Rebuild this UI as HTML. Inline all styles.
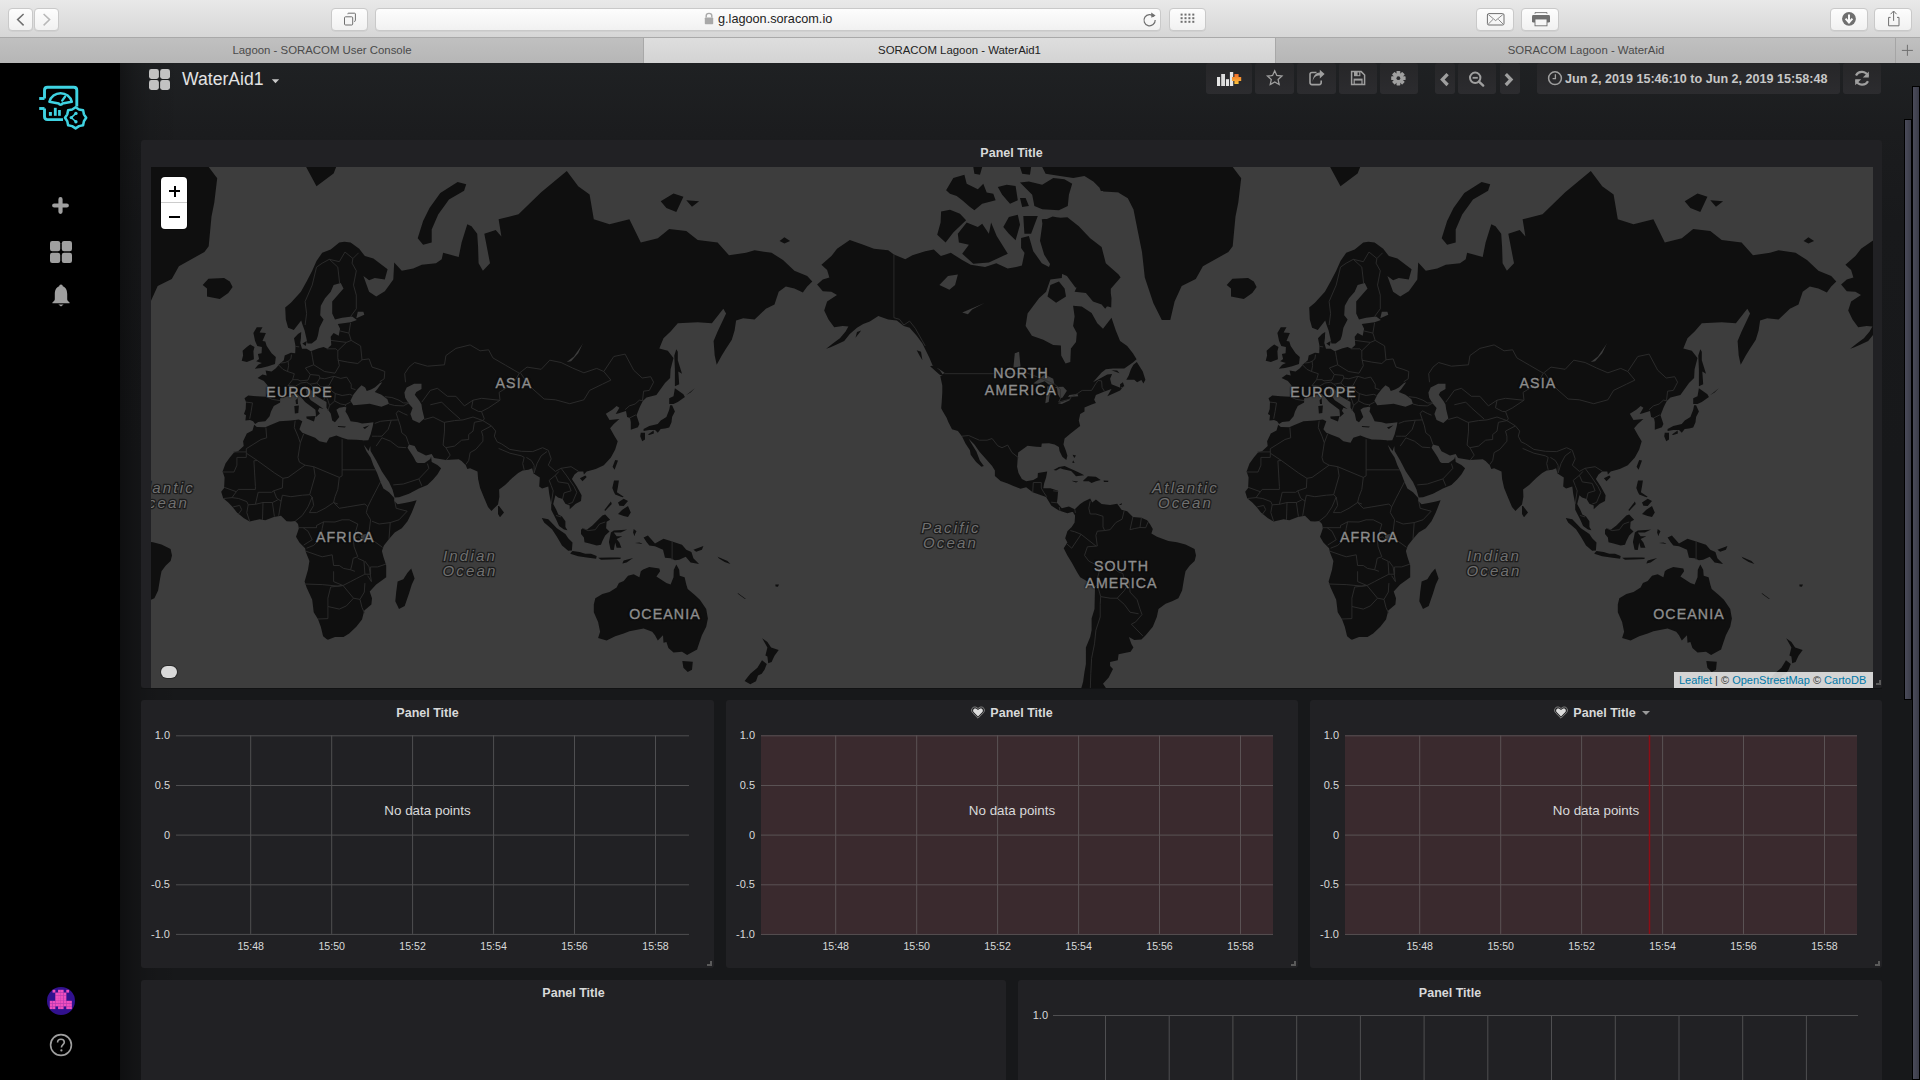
<!DOCTYPE html><html><head><meta charset="utf-8"><style>
*{box-sizing:border-box}
html,body{margin:0;padding:0;width:1920px;height:1080px;overflow:hidden;background:#161719;font-family:"Liberation Sans",sans-serif}
.abs{position:absolute}
#toolbar{position:absolute;left:0;top:0;width:1920px;height:38px;background:linear-gradient(#e9e9e9,#d6d6d6);border-bottom:1px solid #a9a9a9}
.sbtn{position:absolute;top:8px;height:23px;background:linear-gradient(#fdfdfd,#f1f1f1);border:1px solid #c9c9c9;border-radius:4px;box-shadow:0 0.5px 0 rgba(0,0,0,0.08)}
#tabs{position:absolute;left:0;top:38px;width:1920px;height:25px;background:linear-gradient(#c0c0c0,#b6b6b6)}
.tab{position:absolute;top:0;height:25px;font-size:11.4px;color:#4a4a4a;text-align:center;line-height:24px}
.tab.active{background:linear-gradient(#dedede,#d3d3d3);color:#222;border-left:1px solid #a8a8a8;border-right:1px solid #a8a8a8}
#side{position:absolute;left:0;top:63px;width:120px;height:1017px;background:#000}
#main{position:absolute;left:120px;top:63px;width:1800px;height:1017px;background:linear-gradient(90deg,rgba(0,0,0,0.38) 0px,rgba(0,0,0,0.2) 14px,rgba(0,0,0,0.08) 30px,rgba(0,0,0,0) 60px),linear-gradient(180deg,#1f2123 0px,#1b1c1e 70px,#18191b 160px,#17181a 400px)}
.nbtn{position:absolute;top:63px;height:31px;background:linear-gradient(#262628,#2c2c2f);border-radius:3px;color:#a0a0a0}
.panel{position:absolute;background:#212124;border-radius:3px}
.ptitle{position:absolute;left:0;right:0;top:5px;text-align:center;font-size:12.5px;font-weight:bold;color:#d8d9da;line-height:16px}
.ylab{position:absolute;font-size:11px;color:#d8d9da;text-align:right;line-height:14px}
.xlab{position:absolute;font-size:10.6px;color:#d8d9da;width:40px;text-align:center;line-height:14px}
.nodata{position:absolute;left:0;right:0;text-align:center;font-size:13.4px;color:#d8d9da;line-height:16px}
.rh{position:absolute;right:2px;bottom:2px;width:5px;height:5px;border-right:2px solid #5a5a5a;border-bottom:2px solid #5a5a5a}
.heart{font-size:13px;color:#d8d9da;margin-right:5px;font-weight:normal}
.pcaret{display:inline-block;width:0;height:0;border-left:4px solid transparent;border-right:4px solid transparent;border-top:4px solid #9a9a9a;margin-left:6px;vertical-align:2px}

.clab{position:absolute;width:300px;text-align:center;font-weight:normal;color:#8c8c8c;-webkit-text-stroke:0.35px #8c8c8c;line-height:16px;text-shadow:0 0 2px #0e0e0e,0 0 2px #0e0e0e,0 0 1px #0e0e0e}
.olab{position:absolute;width:300px;text-align:center;font-weight:normal;font-style:italic;color:#707070;line-height:16px;-webkit-text-stroke:2.6px #1c1c1c;paint-order:stroke fill}
.zoomc{position:absolute;background:#fff;border-radius:4px;box-shadow:0 0 0 1px rgba(0,0,0,0.3)}
.zplus{position:absolute;left:8px;top:9.5px;width:11px;height:9px}
.zplus:before{content:"";position:absolute;left:0;top:3.5px;width:11px;height:2px;background:#000}
.zplus:after{content:"";position:absolute;left:4.5px;top:-1px;width:2px;height:11px;background:#000}
.zminus{position:absolute;left:8px;top:39px;width:11px;height:2px;background:#000}
.attr{position:absolute;background:rgba(255,255,255,0.78);font-size:11px;line-height:16px;padding-left:5px;white-space:nowrap;color:#333}
.lk{color:#0078a8}
</style></head><body><div id="toolbar"></div>
<div class="sbtn" style="left:8px;width:25px"></div>
<div class="sbtn" style="left:34px;width:25px"></div>
<div class="sbtn" style="left:331px;width:37px"></div>
<div class="sbtn" style="left:1169px;width:37px"></div>
<div class="sbtn" style="left:1476px;width:38px"></div>
<div class="sbtn" style="left:1521px;width:38px"></div>
<div class="sbtn" style="left:1830px;width:38px"></div>
<div class="sbtn" style="left:1874px;width:38px"></div>
<div class="sbtn" style="left:375px;width:786px"></div>
<div class="abs" style="left:718px;top:11px;font-size:12.7px;color:#222;line-height:16px">g.lagoon.soracom.io</div>
<div id="tabs">
<div class="tab" style="left:0;width:644px">Lagoon - SORACOM User Console</div>
<div class="tab active" style="left:643px;width:633px">SORACOM Lagoon - WaterAid1</div>
<div class="tab" style="left:1276px;width:620px">SORACOM Lagoon - WaterAid</div>
</div>
<div id="side"></div>
<div id="main"></div>
<div class="nbtn" style="left:1206px;width:46px"></div>
<div class="nbtn" style="left:1255px;width:39px"></div>
<div class="nbtn" style="left:1297px;width:39px"></div>
<div class="nbtn" style="left:1339px;width:38px"></div>
<div class="nbtn" style="left:1380px;width:38px"></div>
<div class="nbtn" style="left:1435px;width:20px"></div>
<div class="nbtn" style="left:1458px;width:38px"></div>
<div class="nbtn" style="left:1500px;width:20px"></div>
<div class="nbtn" style="left:1537px;width:303px"></div>
<div class="nbtn" style="left:1843px;width:38px"></div>
<div class="abs" style="left:1565px;top:71px;font-size:12.6px;font-weight:bold;color:#c7c7c7;line-height:16px">Jun 2, 2019 15:46:10 to Jun 2, 2019 15:58:48</div>
<div class="abs" style="left:182px;top:68px;font-size:17.6px;color:#e3e3e3;line-height:22px">WaterAid1</div>
<div class="panel" style="left:141px;top:140px;width:1741px;height:548px"><div class="ptitle">Panel Title</div></div>
<div class="abs" style="left:151px;top:167px;width:1722px;height:521px;background:#3d3d3d;overflow:hidden"><svg width="1722" height="521" style="position:absolute;left:0;top:0"><defs><g id="w"><path d="M34.1,262.4L39.8,257.5L46.4,255.4L44.1,248.1L38.4,242.8L48.4,234.1L54.0,226.7L66.8,218.0L79.6,222.4L91.0,226.7L105.2,228.3L110.9,232.5L122.3,237.3L129.4,233.3L142.2,229.2L150.8,227.5L157.9,234.1L167.8,230.8L179.2,238.1L187.7,242.8L202.0,245.1L213.3,241.2L224.7,246.6L233.2,245.1L238.9,243.5L244.6,216.2L250.3,229.2L258.8,241.2L266.0,245.1L271.6,229.2L280.2,235.7L278.8,256.1L267.4,257.5L263.1,269.8L256.0,276.3L244.6,291.6L242.6,304.1L248.9,313.7L260.3,317.8L270.2,322.9L277.9,323.4L278.2,333.6L282.5,341.5L287.3,340.1L287.9,326.4L293.0,319.9L293.8,311.1L290.1,304.1L291.6,294.5L290.1,283.8L298.7,284.4L308.6,291.0L314.3,301.3L320.0,306.8L328.5,295.7L332.8,308.4L337.1,318.9L344.2,323.9L349.9,331.2L353.6,337.3L349.9,340.5L341.3,346.4L330.0,346.4L322.8,347.3L318.6,350.4L310.0,360.2L324.3,352.5L329.1,352.1L327.1,356.8L328.5,362.2L338.5,366.3L341.3,363.5L337.1,368.4L324.3,374.3L328.5,367.1L321.4,369.6L312.9,373.1L311.2,377.8L312.9,380.9L308.6,382.4L301.5,385.4L301.5,389.5L297.2,392.1L295.8,398.6L297.2,403.9L293.0,407.3L287.3,411.8L281.6,416.5L280.5,422.5L283.0,429.0L284.4,433.8L283.3,437.9L279.3,434.7L276.5,429.0L275.9,425.1L271.6,422.5L266.0,421.2L258.8,421.5L258.3,425.1L253.2,424.8L244.6,423.8L240.4,426.7L235.2,430.6L234.7,436.0L234.1,444.7L235.5,450.9L238.9,456.9L243.2,459.3L250.3,458.1L254.6,455.4L254.9,450.9L264.2,449.4L263.1,455.4L261.1,461.4L260.3,466.2L267.4,466.2L275.1,468.8L274.5,476.2L273.9,480.8L278.8,486.3L285.9,484.6L291.6,487.2L291.6,489.2L284.4,491.2L275.9,488.6L268.2,483.4L263.1,475.0L256.0,472.4L249.7,470.3L243.2,465.3L237.5,466.8L230.4,464.1L224.7,461.4L217.6,459.0L211.9,453.9L211.9,448.4L209.1,444.1L203.4,437.6L196.3,429.6L191.4,422.5L185.5,416.5L190.0,424.1L193.4,429.6L196.8,438.5L200.8,444.1L198.5,444.7L193.1,440.1L187.7,432.8L186.9,428.3L182.6,421.8L178.9,414.2L174.9,409.1L169.0,407.3L165.3,400.0L163.6,395.7L159.9,389.5L158.2,386.2L158.7,380.1L159.3,370.4L159.3,363.5L157.3,354.3L161.6,350.8L156.4,347.3L149.3,342.8L146.5,335.9L142.2,327.3L139.4,321.4L133.7,313.7L126.6,305.7L120.9,304.1L113.8,298.5L105.2,297.4L95.3,293.9L86.8,299.6L80.2,301.9L74.0,305.7L66.8,312.1L61.2,318.9L52.6,322.9L46.9,325.4L43.2,326.8L49.8,321.4L56.9,316.3L62.6,309.5L65.4,304.6L59.7,304.1L51.2,305.2L45.5,297.4L41.2,288.6L44.1,279.5L54.0,273.1L48.4,269.8L39.8,269.2ZM291.8,487.2L297.2,482.0L300.9,479.6L307.2,476.5L309.2,480.5L312.9,477.6L318.6,482.0L327.1,483.1L334.2,481.7L338.5,487.7L344.2,489.2L349.9,494.9L358.4,495.8L364.1,498.3L366.9,502.0L369.8,506.9L368.4,511.4L374.0,514.8L385.4,519.1L394.0,520.3L402.5,522.5L411.6,527.1L413.0,533.4L411.6,539.1L406.8,543.5L402.5,549.3L401.1,556.6L399.1,568.6L395.4,576.2L389.1,579.3L382.6,581.7L375.5,587.1L373.8,595.0L369.8,604.8L362.7,613.2L358.4,617.4L351.3,618.0L345.9,614.9L348.4,621.9L350.4,625.4L347.6,629.7L335.6,632.3L334.8,638.2L327.1,640.1L327.1,643.9L330.0,647.0L325.7,655.6L320.0,661.8L324.3,668.0L318.6,676.7L315.7,683.5L317.2,688.1L322.8,700.1L318.6,704.1L312.9,700.1L305.8,692.8L300.1,685.8L297.2,670.2L300.1,659.7L301.5,649.7L302.9,642.0L302.9,625.4L307.2,614.9L308.6,608.2L308.6,596.6L311.5,587.1L312.0,565.6L307.2,561.1L297.2,555.2L294.4,550.8L288.7,540.6L284.4,533.4L280.7,526.2L284.4,520.5L282.2,516.3L284.4,509.2L288.7,504.9L291.6,500.6L292.1,493.5L290.1,490.6ZM328.2,285.6L317.2,282.0L310.0,279.5L302.9,271.1L291.6,269.8L294.4,263.8L302.9,263.1L305.8,251.0L295.8,248.8L291.6,233.3L278.8,230.8L273.1,229.2L261.7,220.6L258.8,197.3L270.2,196.3L284.4,195.3L295.8,204.2L307.2,216.2L318.6,225.0L322.8,241.2L335.6,252.5L337.6,255.4L327.1,266.5L328.5,276.3ZM283.0,274.4L273.1,280.7L264.5,274.4L267.4,263.1L275.9,259.6L281.6,266.5ZM78.2,308.4L72.5,315.8L74.0,310.0ZM496.1,402.1L494.1,399.3L491.0,397.9L486.4,398.6L487.0,393.2L485.0,392.1L486.7,386.9L487.0,380.1L485.5,376.3L489.2,373.5L497.8,374.3L506.9,374.7L508.6,368.4L508.6,363.5L504.9,358.9L498.6,356.0L503.5,352.5L507.7,353.4L506.6,348.6L512.6,349.5L516.6,346.4L520.5,341.9L524.8,338.2L525.7,333.6L531.9,330.7L536.2,331.2L536.5,323.9L535.0,316.3L539.0,312.1L542.2,310.0L541.9,316.3L541.3,320.9L543.0,326.8L547.6,326.8L551.8,329.3L558.9,326.4L564.6,324.9L568.3,326.8L572.3,322.9L571.7,314.8L574.6,311.1L579.7,313.7L581.1,306.8L578.8,301.9L591.6,300.2L597.9,297.9L593.1,294.5L583.1,295.7L576.0,297.4L573.2,291.6L573.2,279.5L584.5,266.5L581.7,261.0L574.6,263.1L571.7,269.8L566.0,276.3L561.8,283.8L561.2,293.3L564.6,297.4L560.4,305.7L558.9,313.7L557.5,317.8L552.7,321.4L548.4,321.4L547.6,317.3L545.6,308.4L543.6,303.0L542.2,298.5L534.8,307.9L529.1,305.7L526.8,297.4L526.2,285.6L531.9,280.7L541.9,269.8L547.6,259.6L553.2,248.8L557.5,238.9L563.2,230.8L571.7,227.5L580.3,220.6L585.4,219.8L591.6,220.6L600.2,226.7L605.9,234.1L614.4,236.5L628.6,247.3L625.8,257.5L615.8,256.1L610.1,258.2L604.4,253.9L610.1,269.8L617.2,274.4L625.8,269.2L634.3,257.5L635.2,240.4L642.8,248.8L654.2,246.6L662.8,242.8L677.0,241.2L682.7,237.3L684.1,230.8L699.7,234.9L702.6,220.6L708.3,202.2L712.5,204.2L718.2,211.7L719.1,225.0L719.6,241.2L723.9,248.8L731.0,241.2L725.3,211.7L736.7,208.0L742.4,214.4L739.6,197.3L759.5,192.2L782.2,170.2L807.8,148.9L819.2,164.2L830.6,172.5L834.8,197.3L850.5,202.2L870.4,197.3L881.8,220.6L898.8,216.2L910.2,207.0L927.3,208.9L938.7,218.0L958.6,220.6L970.0,233.3L987.0,230.8L995.6,228.3L1012.6,230.8L1024.0,238.1L1035.4,248.8L1048.2,253.9L1053.3,259.6L1048.2,264.5L1043.9,270.5L1035.4,266.5L1026.8,264.5L1019.7,269.8L1015.5,282.6L1006.9,286.8L995.6,297.4L984.2,296.2L977.1,298.5L975.6,308.4L972.8,317.8L967.1,326.4L962.8,333.6L957.7,342.8L955.7,333.6L954.6,318.9L958.6,309.5L967.1,291.6L964.3,286.8L952.9,301.3L938.7,300.2L918.8,301.3L911.6,309.5L904.5,316.3L900.3,326.4L908.8,328.8L914.5,335.9L911.6,347.3L911.1,356.0L906.0,361.0L897.4,373.1L887.5,375.5L883.8,379.0L880.9,384.7L877.5,393.2L880.4,402.1L878.9,405.3L871.8,407.7L871.8,400.3L871.0,396.1L868.1,395.0L867.0,389.1L859.0,391.4L856.7,392.1L860.4,385.8L857.6,383.9L853.3,387.7L846.8,391.7L850.5,397.9L860.4,397.1L854.8,402.1L851.1,406.3L855.6,414.2L858.7,419.2L856.2,427.4L851.9,435.4L844.8,443.2L836.8,446.9L827.7,449.4L824.9,452.4L824.3,449.4L819.2,449.4L815.5,452.4L812.9,456.9L817.8,464.4L822.6,473.2L822.0,479.1L816.4,482.0L810.7,487.2L810.7,483.4L806.4,481.7L803.6,477.0L799.0,475.6L796.4,473.2L794.2,482.0L797.3,487.7L799.3,492.6L803.0,494.6L806.4,499.2L806.4,504.9L808.4,508.3L805.0,507.4L800.1,504.0L797.3,497.8L792.2,487.7L792.2,482.0L790.2,471.8L789.3,464.4L783.1,466.5L780.2,464.4L780.8,455.4L774.5,451.5L773.1,446.3L769.4,447.8L763.7,448.4L759.2,450.9L753.8,455.4L746.1,462.9L740.1,467.4L740.4,474.7L739.0,482.5L732.4,488.9L729.0,484.9L725.3,476.2L721.1,465.9L719.1,456.9L718.5,449.4L711.1,446.3L708.3,446.9L706.8,443.2L702.6,439.1L699.7,437.3L686.9,437.9L675.0,436.0L672.7,431.9L667.0,433.5L658.5,429.3L655.6,424.1L650.0,422.5L648.5,425.7L652.8,432.2L654.8,435.4L657.1,440.1L658.8,441.0L665.6,441.0L671.3,436.9L672.1,434.4L672.7,440.1L678.4,442.9L682.1,446.3L678.4,452.4L674.1,457.5L668.4,462.9L659.9,466.5L650.0,471.8L640.0,475.3L635.7,475.6L633.5,467.4L630.0,459.9L622.9,449.4L617.2,438.5L611.6,429.0L611.3,424.1L609.6,429.0L604.7,422.8L603.9,418.5L609.3,418.2L611.6,412.5L613.8,403.9L614.4,400.3L608.7,401.1L603.0,401.4L598.8,400.3L591.6,399.3L588.8,393.2L586.5,389.5L587.4,385.4L586.0,384.7L580.3,385.8L577.4,387.7L580.3,395.0L576.0,400.3L573.2,398.6L571.7,391.4L567.5,385.8L567.5,380.1L557.5,374.3L551.8,367.6L550.4,365.5L547.0,367.6L547.6,372.3L551.8,378.2L557.5,382.0L564.6,386.9L560.4,385.8L558.9,388.8L560.9,391.4L556.7,395.3L556.9,392.4L556.4,387.7L552.4,384.7L546.1,380.1L541.9,375.1L537.6,371.2L533.3,373.1L526.2,375.1L521.1,376.3L521.1,380.5L514.8,383.9L512.0,389.5L510.6,394.3L506.3,399.3L499.2,400.0ZM495.8,346.8L502.0,346.0L509.2,344.2L516.0,341.9L516.8,335.0L512.6,331.2L507.7,323.9L506.3,319.4L503.5,318.9L506.9,311.1L500.6,310.6L503.5,305.2L497.8,305.2L494.4,311.1L496.1,318.9L498.3,323.9L502.9,324.9L502.6,331.2L498.9,332.1L500.1,336.9L497.2,339.2L502.9,341.0L499.2,342.8ZM494.9,337.3L494.4,329.3L495.5,324.9L491.2,322.4L487.8,324.9L483.6,328.8L484.1,333.6L482.7,338.7L487.8,340.1ZM448.0,266.5L443.7,263.1L449.4,256.8L465.1,256.1L470.8,259.6L473.6,265.1L469.3,271.1L460.8,276.9L448.0,274.4ZM547.3,394.6L556.4,393.9L555.0,399.6L547.6,396.4ZM535.3,383.9L539.9,383.5L539.3,391.0L535.9,391.4ZM536.5,378.2L538.7,376.3L539.0,382.0L537.0,382.0ZM578.8,403.9L586.8,404.6L586.0,405.6L579.1,404.9ZM603.9,405.6L610.4,403.2L605.9,407.0ZM543.3,321.4L547.8,318.9L546.7,323.9ZM543.3,137.9L557.5,164.2L574.6,151.6L588.8,115.0L546.1,115.0ZM915.9,364.3L920.2,362.2L919.3,349.5L923.0,351.7L918.8,338.2L918.8,329.8L917.3,327.3L915.3,333.6L915.9,347.3ZM910.2,382.0L914.5,382.0L918.8,380.1L925.9,375.1L924.4,372.3L915.9,366.3L914.5,374.3L910.2,376.3ZM913.1,383.2L915.9,389.5L913.1,395.0L912.5,400.3L910.2,405.6L906.0,406.6L901.7,407.0L898.8,410.8L896.0,408.0L890.3,408.0L884.6,409.1L884.6,407.0L890.3,403.9L898.8,402.1L901.7,398.6L907.4,395.0L910.2,387.7L911.1,383.2ZM881.8,410.8L886.0,410.8L886.0,417.5L883.2,419.2L881.2,414.2ZM888.9,412.5L894.6,408.4L894.9,411.4L890.3,413.1ZM856.2,437.9L859.0,438.5L855.6,447.8L853.6,444.7ZM820.9,456.3L826.3,453.6L827.7,455.1L823.5,459.3ZM739.0,484.0L740.1,484.0L745.0,490.6L741.0,495.2L739.0,492.0ZM855.0,458.4L859.9,458.4L859.0,464.4L857.9,470.3L864.7,474.7L863.3,475.3L856.2,472.4L855.0,470.3L853.3,465.9ZM859.0,492.0L863.3,487.7L869.0,484.0L871.8,490.6L869.0,494.9L864.7,494.0ZM859.0,480.5L864.7,476.7L869.0,479.1L864.7,484.0L860.4,483.7ZM845.4,488.0L851.9,479.6L852.8,482.0L846.2,488.9ZM822.0,507.7L823.8,506.3L827.7,507.7L833.4,503.5L839.1,497.8L843.4,493.5L846.2,492.6L851.1,497.8L847.6,499.8L847.1,506.3L850.5,509.4L846.2,513.4L843.4,519.1L842.0,522.8L837.7,523.4L830.6,521.4L825.5,520.3L824.9,515.4L822.0,512.0ZM782.8,496.0L789.3,497.2L797.9,506.3L806.4,512.0L809.2,516.3L813.5,520.5L812.9,528.5L809.2,528.8L803.0,523.4L797.9,514.8L793.0,507.2L785.1,500.6ZM811.2,531.4L813.5,529.1L820.6,530.0L826.3,531.7L832.0,531.7L837.7,534.0L837.1,536.8L827.7,535.4L819.2,534.3L812.1,532.0ZM839.1,535.7L850.5,535.4L859.0,535.4L861.9,535.7L861.3,537.1L850.5,537.4L842.0,537.7ZM864.7,538.6L874.1,536.0L867.6,540.6L863.3,541.5ZM849.9,520.0L851.9,510.6L854.8,508.6L866.1,507.7L868.1,507.4L861.9,510.6L854.8,510.6L857.6,514.3L863.3,514.3L857.6,517.1L860.4,520.5L862.4,525.7L857.6,525.7L856.2,520.5L854.8,528.0L851.6,527.7ZM884.6,515.4L888.9,513.4L896.0,521.4L904.5,516.8L913.1,519.4L923.0,522.8L927.3,527.7L932.4,530.0L934.4,536.3L940.1,542.0L931.6,540.6L926.7,534.8L920.2,537.7L915.9,538.3L911.6,536.3L906.0,535.7L904.0,527.7L896.0,524.2L890.3,523.4L887.5,520.0ZM934.4,527.7L944.4,524.0L942.9,527.7L937.2,529.7ZM917.3,542.6L920.2,547.8L920.7,553.7L925.6,555.2L927.3,562.6L928.7,567.1L935.8,573.1L940.9,577.7L947.2,587.1L948.9,596.6L947.2,604.8L942.9,613.2L938.7,625.4L938.1,627.6L928.1,633.0L923.0,629.7L914.5,630.5L909.4,626.1L907.4,620.1L904.5,620.8L904.0,613.2L898.8,618.4L896.0,613.2L893.2,609.8L884.6,606.5L870.4,609.2L864.7,611.5L856.2,614.3L847.6,618.4L839.1,616.0L841.1,609.8L839.1,599.9L834.8,590.2L834.8,582.4L836.3,576.2L843.4,571.9L850.5,570.1L857.6,565.6L859.9,561.1L864.7,559.0L869.0,553.7L874.7,552.2L880.4,555.2L881.8,549.3L884.1,547.5L890.3,544.9L900.3,546.4L901.1,549.3L897.4,554.6L907.4,561.1L911.6,562.6L914.5,555.2L914.8,547.8ZM923.3,638.9L933.8,639.7L933.0,647.7L928.7,650.1L924.4,645.8ZM1003.2,616.3L1008.4,620.1L1012.1,625.4L1019.7,627.9L1015.5,633.7L1012.6,640.1L1009.2,641.2L1008.4,634.5L1006.4,633.4L1008.4,625.4ZM1003.0,638.2L1007.8,642.0L1005.5,647.7L1002.7,651.7L999.0,653.6L997.0,659.3L991.3,662.2L985.6,658.9L991.3,651.7L998.4,645.8ZM495.2,402.8L493.5,408.4L487.8,411.4L484.1,419.2L484.7,424.1L479.3,429.0L475.0,430.6L470.8,435.4L466.5,441.6L463.6,449.4L465.6,455.4L465.1,465.9L462.2,469.7L464.2,476.2L469.3,480.5L473.6,484.9L477.9,490.6L485.0,496.3L490.7,499.5L500.6,497.2L506.3,498.3L514.8,494.9L522.0,493.8L527.6,499.2L531.9,499.5L536.2,498.9L539.0,502.0L539.9,506.3L538.5,510.6L537.0,514.8L540.4,520.5L546.1,526.2L547.0,530.5L550.4,539.1L549.0,547.8L545.6,559.6L547.6,565.6L553.2,577.7L554.7,590.2L558.9,597.0L561.8,604.8L564.1,614.3L567.5,617.0L568.9,617.7L576.0,614.9L584.5,614.9L590.2,611.5L597.3,604.8L603.0,597.6L605.3,588.6L612.4,582.4L613.0,576.2L610.7,569.5L617.2,562.6L627.2,555.2L627.2,543.5L624.4,534.8L622.9,529.1L624.9,523.4L630.0,517.1L635.7,510.6L642.8,506.3L648.5,499.2L652.8,490.6L657.6,478.2L652.8,479.6L645.7,481.1L638.6,482.3L635.2,479.1L635.2,475.9L630.0,470.3L624.4,466.5L621.5,459.9L618.1,450.9L614.4,443.2L611.6,435.4L607.3,429.0L604.7,422.8L603.9,418.2L597.3,417.8L588.8,417.5L583.1,415.8L577.4,413.5L570.3,415.8L567.5,420.8L560.4,419.2L556.1,415.8L549.0,413.1L543.3,410.8L540.4,407.3L543.3,399.3L539.9,397.5L531.9,398.6L520.5,399.3L512.0,402.8L506.3,405.3L497.8,404.9ZM652.2,546.4L655.6,556.6L652.8,562.6L650.0,571.6L645.7,583.9L640.0,587.1L636.3,579.3L637.2,570.1L638.6,559.6L644.3,557.2L648.5,550.8ZM270.5,448.1L275.9,445.1L281.6,444.1L285.9,446.0L291.6,448.4L297.0,450.9L301.2,453.3L293.0,454.2L291.0,452.1L288.1,449.1L280.2,447.2L277.3,446.3L273.1,448.4ZM300.1,458.7L304.9,454.2L312.9,454.8L317.7,458.1L312.9,459.3L308.6,461.1L305.8,459.3L300.4,459.3ZM289.0,458.7L295.3,459.6L293.0,460.5L289.6,459.3ZM320.6,458.4L325.4,458.7L325.1,459.9L320.9,459.9ZM289.6,432.8L293.0,433.5L291.3,436.0ZM290.1,438.2L291.6,441.0L289.3,440.7ZM353.8,340.1L359.8,349.5L362.4,357.7L360.4,361.4L358.4,358.1L354.1,360.2L351.3,357.7L343.3,357.7L345.6,353.8L347.9,347.3L350.4,342.8ZM337.1,365.9L341.3,364.3L339.9,360.2L337.1,362.2ZM328.5,348.2L336.5,351.2L334.2,348.6ZM335.9,483.1L338.8,481.1L338.5,483.1ZM337.9,684.8L347.0,682.5L345.6,687.1L339.9,686.7ZM316.9,688.5L327.1,699.1L321.4,701.1L311.5,700.1L307.2,695.2L312.9,692.8ZM161.3,354.7L156.4,352.5L147.1,344.2L150.8,343.3L157.0,348.6ZM139.4,338.2L136.5,333.6L133.7,328.3L138.0,329.8ZM978.5,570.7L987.0,577.1L985.6,576.8L979.1,571.9ZM1016.3,562.6L1020.0,562.6L1018.9,564.7L1016.6,564.4ZM958.6,534.8L968.5,539.1L971.4,542.0L965.7,540.0L960.0,536.6ZM874.7,506.9L877.5,509.2L876.1,512.0L875.5,514.3L874.1,510.6ZM876.1,521.1L884.1,522.0L880.4,520.5ZM1020.6,218.9L1025.4,215.3L1031.1,218.9L1025.4,221.5ZM901.7,179.3L914.5,171.4L924.4,174.8L917.3,190.1L907.4,185.9ZM927.3,178.2L940.1,179.3L933.0,184.8ZM782.2,130.6L796.4,144.9L810.7,137.9L802.1,122.9ZM648.5,106.6L668.4,115.0L688.4,106.6L677.0,88.4ZM927.3,373.1L931.6,370.4L935.8,366.3L933.0,368.4ZM158.1,189.4L167.0,187.8L177.0,191.7L183.1,198.3L170.3,210.6L162.6,220.6L154.2,212.8L157.6,200.6ZM174.8,211.7L183.7,200.6L194.8,205.0L199.2,201.7L205.9,211.7L208.1,200.6L213.7,213.9L224.8,231.7L205.9,240.6L190.3,241.7L179.2,231.7L185.9,222.8L175.9,220.6ZM220.3,205.0L225.9,195.0L234.8,192.8L237.0,202.8L232.6,218.3L225.9,211.7ZM240.3,193.9L254.8,193.9L248.1,211.7L241.4,211.7ZM238.1,216.1L245.9,213.9L250.3,229.4L243.7,233.9L238.1,226.1ZM163.1,168.3L170.3,156.1L181.4,152.8L183.7,161.7L194.8,167.2L200.3,161.7L203.7,170.6L210.3,171.7L212.6,178.3L199.2,181.7L191.4,188.3L187.0,185.0L179.2,178.3L173.7,173.9L167.0,171.7ZM214.8,165.0L223.7,162.8L232.6,163.9L234.8,178.3L227.0,181.7L219.2,172.8ZM237.0,176.1L242.6,176.1L245.9,183.9L239.2,185.0ZM237.0,160.6L245.9,159.4L259.2,162.8L270.3,156.1L281.4,157.2L289.2,161.7L285.9,172.8L284.8,183.9L275.9,188.3L259.2,187.2L251.4,183.9L249.2,172.8L243.7,167.2ZM259.2,145.0L337.0,145.0L337.0,170.6L320.3,169.4L310.3,159.4L301.4,153.9L290.3,156.1L277.0,153.9L262.6,151.7ZM190.3,145.0L199.2,145.0L197.0,152.8L191.4,151.7ZM237.0,145.0L248.1,145.0L247.0,152.8L239.2,151.7ZM306.6,145.0L449.7,145.0L458.2,156.3L455.3,180.4L452.5,194.6L449.7,224.3L445.4,230.0L419.9,244.2L412.8,256.9L398.7,264.0L391.6,279.6L387.3,298.0L378.8,298.0L370.3,281.0L361.8,255.5L359.0,230.0L354.7,208.7L350.5,187.5L344.8,176.2L330.7,167.7L317.9,169.1L313.7,159.2L319.3,152.1ZM259.8,198.8L269.7,194.6L285.3,197.4L295.2,205.9L306.6,217.2L319.3,228.6L322.2,244.2L336.3,256.9L327.8,266.8L327.8,279.6L322.2,286.7L313.7,276.7L303.7,268.2L292.4,265.4L283.9,254.1L271.2,248.4L261.2,232.8L257.0,218.7ZM658.7,216.2L664.1,198.9L670.5,186.0L681.3,170.9L698.6,160.1L707.2,162.3L705.1,168.7L690.0,177.4L679.2,192.5L672.7,207.6L672.7,220.5L664.1,222.7Z" fill="#0f0f0f"/><path d="M250.3,361.4L257.4,356.0L261.7,352.5L270.2,356.8L271.4,362.2L266.0,362.7L261.7,359.3L254.6,361.8ZM262.3,381.3L264.5,364.3L270.2,365.1L266.5,374.3L265.7,380.1ZM271.6,365.1L280.2,364.7L283.9,368.8L279.6,375.5L277.3,376.3L274.8,372.3L273.9,366.3ZM274.8,381.3L287.3,377.0L286.7,378.2L278.8,382.0ZM285.0,375.1L295.3,374.3L294.4,372.0L286.4,373.1ZM230.4,345.5L237.5,344.6L236.1,329.8L231.8,331.2ZM179.2,290.4L193.4,284.4L202.0,280.7L189.2,287.4L184.9,292.2ZM156.4,263.1L165.0,253.9L174.9,252.5L172.1,263.1L166.4,267.8ZM602.2,512.9L608.7,511.4L609.3,514.8L606.7,519.1L603.0,518.5L601.9,514.8ZM807.8,340.1L812.1,339.2L819.2,331.2L824.3,320.4L822.9,322.9L814.9,334.5ZM597.3,296.2L605.3,292.8L604.4,289.8L598.8,289.8ZM591.4,378.7L594.3,372.8L598.8,366.9L602.5,363.2L606.2,365.4L607.7,369.1L612.1,367.6L615.8,365.4L621.0,361.0L623.2,360.2L618.0,367.6L615.8,369.9L622.5,372.8L628.4,377.3L629.9,381.7L622.5,384.7L610.6,381.7L603.2,382.4L594.3,383.2ZM645.4,370.6L647.7,365.4L655.1,361.7L662.5,361.7L662.5,366.9L657.3,369.9L655.8,372.8L660.3,378.7L662.5,382.4L663.2,387.6L665.4,396.5L660.3,401.0L653.6,398.0L651.4,392.1L653.6,386.1L649.9,381.7L646.2,375.8Z" fill="#3d3d3d"/><path d="M161.3,351.7L241.2,351.7L241.2,349.9L257.1,356.0L271.4,362.2L277.3,367.1L277.6,376.3L275.6,380.1L287.3,377.0L287.3,375.5L294.4,371.6L299.2,368.4L308.6,368.4L312.9,361.4L315.2,358.5L318.6,358.9L319.1,365.5L321.4,369.2M110.9,232.5L110.9,295.7L116.6,297.4L120.9,303.0L126.6,299.1L132.3,306.3L139.4,318.9L142.2,323.9M178.9,414.2L185.7,413.5L196.3,418.2L204.2,418.2L209.1,416.5L214.8,423.8L219.0,425.7L224.7,423.1L229.0,430.6L235.5,435.7M249.7,470.3L250.3,460.5L258.3,460.5L258.3,466.2M258.3,466.2L261.1,470.9L263.7,474.7M270.2,468.8L275.3,469.4M268.2,480.2L273.9,480.8M276.2,484.9L277.0,488.9M291.8,487.2L292.4,490.9M307.2,479.1L305.8,486.3L307.2,492.0L312.9,492.0L320.0,494.3L320.0,504.9L321.7,508.6M341.3,488.0L339.1,497.2L332.8,500.6L327.1,507.7L321.4,508.6L314.3,509.2L312.9,513.4L314.3,524.0L304.4,524.8L301.5,533.4L305.8,539.1L314.3,543.5L325.7,540.6L334.2,549.3L339.9,551.6L341.3,559.0L346.5,559.6L347.0,570.1L354.1,577.7L357.0,587.1L359.0,592.5L352.7,599.9L348.4,602.2L359.8,613.9M349.9,494.9L347.0,507.7L351.3,506.6L357.0,505.5L362.7,505.7L365.2,499.8M358.4,495.5L357.0,505.5M283.6,521.7L288.7,526.2L298.1,512.3L291.6,509.7L287.3,508.6M298.1,512.3L312.9,524.0M314.3,543.5L316.3,549.3L314.3,556.6L314.3,562.6L312.0,565.0M314.3,562.6L317.7,574.6L317.2,582.4L317.2,595.0L312.9,608.2L311.5,621.9L308.6,636.3L307.8,651.7L307.2,670.2L305.8,676.7L315.7,685.8M317.7,574.6L327.1,576.2L334.2,576.2L341.3,568.6L346.5,559.6M334.2,576.2L341.3,582.4L347.0,590.2L355.6,591.8M487.0,380.1L493.5,380.9L492.1,389.5L490.7,396.8M506.9,374.7L513.4,377.4L521.1,378.6M519.1,342.4L523.9,347.3L528.5,349.5L535.3,351.7L533.6,357.7L529.1,363.5L531.9,366.3L533.3,373.1M521.7,341.0L526.2,340.5L529.1,339.2L531.9,336.9L532.5,332.6M528.5,349.5L529.6,343.7L529.1,339.2M536.5,324.4L540.2,324.9M552.4,329.3L553.5,335.9L554.7,342.8L546.4,346.0L551.3,352.5L549.0,358.1L541.0,358.9L539.0,357.7L533.6,357.7M554.7,342.8L565.5,349.5L576.0,351.2L580.3,343.7L578.8,335.9L578.8,328.8L576.9,326.8L567.8,326.8M551.3,352.5L560.1,353.4L560.9,356.0L565.8,356.8L574.9,354.3M529.1,363.5L536.2,364.3L541.9,361.0L547.6,360.2L551.0,362.2L557.8,361.0L560.9,356.0M551.0,362.2L556.7,367.6L561.8,364.7M557.8,361.0L561.8,364.7L565.8,364.7L569.7,363.9L574.9,354.3L581.7,356.4L587.7,355.1L592.2,362.2L592.2,366.3L596.5,367.6M569.7,363.9L572.9,369.2L576.3,371.6L583.1,373.5L590.8,372.3L593.4,373.5M576.3,371.6L575.7,379.0L581.7,382.0L586.2,382.8L591.6,380.1M586.2,382.8L586.8,384.3M556.7,367.6L566.0,368.4L567.2,374.3L568.9,378.2L570.6,383.5L568.9,388.8M575.7,379.0L570.6,383.5M566.0,368.4L567.2,372.3L564.6,378.2M578.8,338.2L588.8,340.1L598.8,341.5L603.0,337.8L610.1,336.9L613.0,345.1L620.1,347.3L625.8,349.5L625.2,356.8L620.7,359.8M578.8,328.8L587.4,320.4L592.2,318.4L601.6,323.9L603.0,337.8M572.0,318.4L587.4,320.4M581.1,309.0L589.9,311.1L591.6,300.8M592.2,318.4L589.9,311.1M591.6,294.5L597.3,286.8L597.3,273.1L594.5,263.1L597.3,248.8L593.1,241.2L593.9,236.5M546.1,303.0L547.6,291.6L546.1,279.5L553.2,263.1L557.5,245.1L563.2,241.2L570.3,237.3L580.3,239.7L586.0,230.0L593.9,236.5L599.6,230.8M580.6,261.0L578.8,245.1L570.3,237.3M646.5,360.2L645.7,351.7L650.0,345.1L655.6,340.5L668.4,344.2L685.5,342.8L686.9,333.6L696.9,326.4L711.1,322.9L721.1,328.8L729.6,327.8L733.9,335.9L746.7,343.3L760.3,351.2M760.3,351.2L768.0,345.1L782.2,347.3L790.8,338.2L802.1,340.5L813.5,346.0L824.9,350.8L837.7,346.4L844.8,349.5L854.8,334.5L866.1,332.1L874.7,348.2L883.2,356.0L891.7,354.7L894.6,360.2L890.3,368.4L884.6,369.2L883.5,378.6M761.7,351.2L770.8,364.3L785.1,377.0L796.4,377.8L810.7,381.7L824.9,377.8L830.6,368.4L843.4,362.2L851.9,358.1L844.8,349.5M760.3,351.2L755.2,360.2L746.7,366.3L740.1,370.4L741.0,378.2L729.6,385.8L722.5,389.5L725.3,396.8L723.9,398.6L732.4,403.9L736.7,409.1L735.3,414.2L738.1,419.8L742.4,421.8M742.4,421.8L750.9,427.4L762.3,429.3L773.7,429.6L783.6,425.7L789.3,428.3L792.2,436.9L789.3,443.2L796.4,449.4L802.1,446.3L812.1,444.7L819.2,449.1M732.4,403.9L722.5,409.1L723.9,414.2L723.9,419.2L716.8,427.4L711.1,430.6L709.7,438.5L706.8,442.6M739.6,426.4L750.9,431.2L762.3,433.8M762.3,433.8L765.2,435.4L763.7,441.6L765.2,447.8M775.1,450.9L775.1,443.2L772.3,438.5L767.4,435.4M775.1,450.9L778.0,441.6L782.2,433.8L787.9,429.6M792.2,482.0L794.2,468.8L792.2,463.5L790.2,458.4L796.4,453.3L799.9,449.4M796.4,453.3L799.3,459.9L809.2,461.4L812.1,468.8L805.0,470.9L803.6,477.0M802.1,446.3L807.8,453.9L814.9,464.4L817.8,470.3L813.5,480.5L809.2,482.0M797.0,493.5L802.1,494.9M685.5,400.3L685.5,409.1L684.1,423.1L686.9,425.7L691.2,433.1L687.2,438.2M723.9,398.6L715.4,400.3L714.0,409.1L709.7,412.5L709.7,417.5L702.6,418.2L695.5,424.1L686.9,425.7M685.5,400.3L695.5,398.6L704.0,397.9L714.0,395.0L723.9,398.6M662.8,380.1L671.3,368.4L678.4,366.3L688.4,374.3L696.9,374.3L705.4,383.9L714.0,378.2L722.5,376.3L740.1,378.2M665.3,397.5L674.1,395.0L684.1,400.0L685.5,400.3M671.3,382.8L682.7,380.1L688.4,385.8L701.2,397.1M714.0,378.2L712.5,385.8L719.6,389.5L722.5,389.5M650.0,422.5L647.1,414.2L642.8,410.8L641.4,403.9L639.4,397.9L637.2,391.4L639.4,388.8M639.4,397.9L632.3,398.2L621.5,399.3L615.8,401.4M632.3,398.2L629.2,407.3L622.9,414.2L618.7,414.2L613.0,414.2M617.2,424.1L622.9,415.8L631.5,419.2L639.1,425.1L647.1,425.7M634.3,462.9L644.3,462.0L659.9,456.9L669.9,446.3L668.4,441.6M659.9,456.9L662.8,463.8M630.0,382.0L635.7,383.5L644.3,383.9L650.0,380.9M625.8,374.7L632.9,375.5L640.0,378.2L644.3,380.9L650.0,380.9M639.4,388.8L644.3,391.4L648.5,393.2M866.1,387.7L870.4,383.9L876.1,382.0L880.4,378.2L883.5,378.6M870.4,396.1L876.9,392.8M823.8,506.3L829.2,508.6L836.3,507.7L840.5,502.0L846.2,500.0M913.1,519.4L913.1,538.0M506.9,405.6L507.7,415.8L502.0,417.5L487.3,426.7L487.3,431.2M487.3,429.9L474.5,429.9M487.3,431.2L487.3,435.4L477.9,435.4L477.9,443.2L475.0,450.0L463.6,450.0M487.3,431.2L498.3,438.5L515.4,450.9L523.9,456.3L529.1,455.4L546.1,443.2M536.2,398.6L535.3,405.6L539.0,414.2L541.3,420.8L539.0,435.4L540.4,440.1L546.1,443.2M544.7,411.8L541.3,420.8M546.1,443.2L554.7,444.7L580.3,455.4L583.1,453.9L583.1,447.8M498.3,438.5L494.9,438.8L496.4,464.4L496.4,467.4L479.3,467.4L477.3,469.7L465.1,465.3M523.9,456.3L523.4,465.9L514.8,468.8L512.6,470.3L499.2,470.3L496.4,482.3M514.8,468.8L517.7,476.2L522.0,479.1L523.4,473.2L531.9,474.7L543.3,473.2L550.7,472.7L553.2,475.0M554.7,444.7L556.1,453.9L550.7,472.7M580.3,455.4L578.8,467.4L576.0,474.7L574.6,480.5M553.2,475.0L554.7,483.4L550.4,490.6L557.5,490.6L566.0,486.3L574.6,480.5L578.8,482.0M574.6,480.5L580.3,486.3L588.8,484.9L605.9,482.0L608.7,484.9L613.0,476.2L615.8,470.9L621.5,459.9M635.7,479.1L637.2,486.3L648.2,489.2L640.0,497.8L631.2,500.6L630.0,516.8M613.0,499.2L620.1,502.0L631.2,500.6M608.7,484.9L607.3,490.6L611.6,497.8M611.6,497.8L610.1,509.2L608.7,514.8L619.0,522.0L623.5,525.4M546.7,529.1L558.9,533.4L563.2,534.8L573.2,532.8L574.6,543.5L580.3,543.5L584.5,546.4L591.6,547.8L595.9,549.3M557.5,503.5L564.6,499.8L576.0,500.0L583.1,497.8L590.2,497.8L598.8,502.0M547.6,526.2L554.7,523.4L561.8,516.3L563.2,506.3L564.6,499.8M598.8,502.0L595.9,512.0L594.5,519.1L595.1,524.8L598.8,534.8L594.2,536.3L593.1,542.0L591.6,547.8M539.0,505.7L544.1,505.7L557.5,505.7L557.5,503.5M544.1,505.7L549.0,509.2L553.2,517.7L544.7,523.1M536.2,499.2L543.3,493.5L549.0,484.9L553.2,475.0M503.5,497.8L504.0,480.5M515.4,494.6L513.4,480.5M519.7,493.8L522.2,478.5M490.7,499.5L487.8,490.6L489.2,482.8M496.4,482.3L504.0,480.5L513.4,480.5L518.8,477.9M479.3,492.3L482.7,487.7L480.7,483.4L474.2,484.9M473.0,475.6L479.6,476.5L487.8,479.6L489.2,482.8L496.4,482.3M464.5,476.5L473.0,475.6L477.3,469.7M545.6,562.0L563.2,562.6L578.8,564.1L584.0,563.5M574.6,549.3L574.6,559.6L584.0,563.5L591.6,559.6L597.3,556.6L605.9,552.2L605.0,539.1L598.8,536.3M568.9,576.2L568.9,584.5L568.9,596.6L558.9,597.0M568.9,576.2L571.7,565.0L584.0,563.5L594.5,576.2L587.4,583.9L580.3,587.1L568.9,584.5M605.9,561.1L605.3,570.1L601.0,577.4M594.5,576.2L601.0,577.4L603.0,585.5L605.6,591.2M627.2,542.0L618.7,544.9L611.6,544.9L611.6,552.2L605.9,552.2M605.9,539.1L610.1,544.9L612.4,559.6L608.7,553.7M583.1,417.2L583.1,447.8L617.0,447.8M603.0,518.5L599.6,514.8L596.2,516.0" fill="none" stroke="#2e2e2e" stroke-width="0.9" stroke-linejoin="round"/></g></defs><use href="#w" transform="translate(-392,-145)"/><use href="#w" transform="translate(632,-145)"/><use href="#w" transform="translate(1656,-145)"/></svg></div>
<div class="abs" style="left:151px;top:167px;width:1722px;height:521px;overflow:hidden"><div class="abs" style="left:-151px;top:-167px;width:1920px;height:1080px"><div class="clab" style="left:149.60000000000002px;top:384px;font-size:14.2px;letter-spacing:1.1px">EUROPE</div><div class="clab" style="left:363.9px;top:375px;font-size:14.2px;letter-spacing:1.1px">ASIA</div><div class="clab" style="left:195.3px;top:529px;font-size:14.2px;letter-spacing:1.1px">AFRICA</div><div class="clab" style="left:515px;top:606px;font-size:14.2px;letter-spacing:1.1px">OCEANIA</div><div class="olab" style="left:320px;top:548px;font-size:15px;letter-spacing:2.2px">Indian</div><div class="olab" style="left:320px;top:563px;font-size:15px;letter-spacing:2.2px">Ocean</div><div class="clab" style="left:1173.6px;top:384px;font-size:14.2px;letter-spacing:1.1px">EUROPE</div><div class="clab" style="left:1387.9px;top:375px;font-size:14.2px;letter-spacing:1.1px">ASIA</div><div class="clab" style="left:1219.3px;top:529px;font-size:14.2px;letter-spacing:1.1px">AFRICA</div><div class="clab" style="left:1539px;top:606px;font-size:14.2px;letter-spacing:1.1px">OCEANIA</div><div class="olab" style="left:1344px;top:548px;font-size:15px;letter-spacing:2.2px">Indian</div><div class="olab" style="left:1344px;top:563px;font-size:15px;letter-spacing:2.2px">Ocean</div><div class="clab" style="left:871px;top:365px;font-size:14.2px;letter-spacing:1.1px">NORTH</div><div class="clab" style="left:871px;top:382px;font-size:14.2px;letter-spacing:1.1px">AMERICA</div><div class="clab" style="left:971.5px;top:558px;font-size:14.2px;letter-spacing:1.1px">SOUTH</div><div class="clab" style="left:971.5px;top:575px;font-size:14.2px;letter-spacing:1.1px">AMERICA</div><div class="olab" style="left:1035.5px;top:480px;font-size:15px;letter-spacing:2.2px">Atlantic</div><div class="olab" style="left:1035.5px;top:495px;font-size:15px;letter-spacing:2.2px">Ocean</div><div class="olab" style="left:11.5px;top:480px;font-size:15px;letter-spacing:2.2px">Atlantic</div><div class="olab" style="left:11.5px;top:495px;font-size:15px;letter-spacing:2.2px">Ocean</div><div class="olab" style="left:801px;top:520px;font-size:15px;letter-spacing:2.2px">Pacific</div><div class="olab" style="left:800.5px;top:535px;font-size:15px;letter-spacing:2.2px">Ocean</div></div></div>
<div class="abs" style="left:1876px;top:680px;width:5px;height:5px;border-right:2px solid #5a5a5a;border-bottom:2px solid #5a5a5a"></div>
<div class="abs" style="left:141px;top:688px;width:1741px;height:1px;background:#111213"></div>
<div class="zoomc" style="left:161px;top:177px;width:26px;height:52px"><div style="position:absolute;left:0;top:25px;width:26px;height:1px;background:#ccc"></div><div class="zplus"></div><div class="zminus"></div></div>
<div class="abs" style="left:161px;top:666px;width:16px;height:12px;background:#d9d9d9;border-radius:6px;box-shadow:0 0 0 1px #2a2a2a"></div>
<div class="attr" style="left:1674px;top:672px;width:199px;height:16px"><span class="lk">Leaflet</span> <span style="color:#333">|</span> <span style="color:#333">&copy;</span> <span class="lk">OpenStreetMap</span> <span style="color:#333">&copy;</span> <span class="lk">CartoDB</span></div>
<svg class="abs" style="left:30px;top:75px;" width="70" height="60" viewBox="0 0 70 60"><g fill="none" stroke="#3fd3e2" stroke-width="2.9" stroke-linejoin="round"><path d="M14.50,23.50 V15.30 Q14.50,12.30 17.50,12.30 H43.80 Q46.80,12.30 46.80,15.30 V31.50"/><path d="M14.50,33.50 V41.60 Q14.50,44.60 17.50,44.60 H33.00"/><path d="M9.20,23.50 H14.50"/><path d="M9.20,33.50 H14.50"/></g><path d="M19.40,26.80 A11.6,11.6 0 0 1 41.80,26.80 L32.40,28.60 A2,2 0 0 1 28.80,28.60 Z" fill="none" stroke="#3fd3e2" stroke-width="2.5" stroke-linejoin="round"/><path d="M32.20,25.60 L35.00,21.80" stroke="#3fd3e2" stroke-width="2.3" stroke-linecap="round"/><g fill="#3fd3e2"><rect x="18.9" y="37" width="3" height="3.8"/><rect x="23.9" y="32.8" width="2.8" height="8"/><rect x="28.1" y="35" width="2.7" height="5.8"/></g><path d="M45.60,32.20L49.04,34.49L53.10,35.30L53.91,39.36L56.20,42.80L53.91,46.24L53.10,50.30L49.04,51.11L45.60,53.40L42.16,51.11L38.10,50.30L37.29,46.24L35.00,42.80L37.29,39.36L38.10,35.30L42.16,34.49Z" fill="#000" stroke="#3fd3e2" stroke-width="2.5" stroke-linejoin="round"/><g fill="#3fd3e2"><circle cx="41.3" cy="42.599999999999994" r="1.7"/><circle cx="45.900000000000006" cy="38.400000000000006" r="1.7"/><circle cx="45.900000000000006" cy="46.8" r="1.7"/></g><path d="M45.90,38.40 L41.30,42.60 L45.90,46.80" fill="none" stroke="#3fd3e2" stroke-width="1.5"/></svg>
<svg class="abs" style="left:52px;top:197px;" width="17" height="17" viewBox="0 0 17 17"><path d="M8.5,2.2 V14.8 M2.2,8.5 H14.8" stroke="#9f9f9f" stroke-width="4.2" stroke-linecap="round"/></svg>
<svg class="abs" style="left:50px;top:241px;" width="22" height="22" viewBox="0 0 22 22"><rect x="0.0" y="0.0" width="10.2" height="10.2" rx="2.2" fill="#9f9f9f"/><rect x="0.0" y="11.799999999999999" width="10.2" height="10.2" rx="2.2" fill="#9f9f9f"/><rect x="11.799999999999999" y="0.0" width="10.2" height="10.2" rx="2.2" fill="#9f9f9f"/><rect x="11.799999999999999" y="11.799999999999999" width="10.2" height="10.2" rx="2.2" fill="#9f9f9f"/></svg>
<svg class="abs" style="left:52px;top:284px;" width="18" height="23" viewBox="0 0 18 23"><path d="M9,0.6 C10.2,0.6 10.6,1.6 10.8,2.2 C14,3.2 15.2,6.6 15.2,10 V15.2 C15.2,16.6 16.6,17.6 17.6,18.4 V19.2 H0.4 V18.4 C1.4,17.6 2.8,16.6 2.8,15.2 V10 C2.8,6.6 4,3.2 7.2,2.2 C7.4,1.6 7.8,0.6 9,0.6 Z" fill="#9f9f9f"/><path d="M6.4,20.4 H11.6 L9,22.6 Z" fill="#9f9f9f"/></svg>
<svg class="abs" style="left:47px;top:987px;" width="28" height="28" viewBox="0 0 28 28"><defs><clipPath id="avc"><circle cx="14" cy="14" r="14"/></clipPath></defs><g clip-path="url(#avc)"><rect width="28" height="28" fill="#31118e"/><rect x="5.55" y="2.80" width="2.80" height="2.80" fill="#f04fbf"/><rect x="11.05" y="2.80" width="2.80" height="2.80" fill="#f04fbf"/><rect x="13.80" y="2.80" width="2.80" height="2.80" fill="#f04fbf"/><rect x="19.30" y="2.80" width="2.80" height="2.80" fill="#f04fbf"/><rect x="8.30" y="5.55" width="2.80" height="2.80" fill="#f04fbf"/><rect x="11.05" y="5.55" width="2.80" height="2.80" fill="#f04fbf"/><rect x="13.80" y="5.55" width="2.80" height="2.80" fill="#f04fbf"/><rect x="16.55" y="5.55" width="2.80" height="2.80" fill="#f04fbf"/><rect x="8.30" y="8.30" width="2.80" height="2.80" fill="#f04fbf"/><rect x="11.05" y="8.30" width="2.80" height="2.80" fill="#f04fbf"/><rect x="13.80" y="8.30" width="2.80" height="2.80" fill="#f04fbf"/><rect x="16.55" y="8.30" width="2.80" height="2.80" fill="#f04fbf"/><rect x="8.30" y="11.05" width="2.80" height="2.80" fill="#f04fbf"/><rect x="11.05" y="11.05" width="2.80" height="2.80" fill="#f04fbf"/><rect x="13.80" y="11.05" width="2.80" height="2.80" fill="#f04fbf"/><rect x="16.55" y="11.05" width="2.80" height="2.80" fill="#f04fbf"/><rect x="2.80" y="13.80" width="2.80" height="2.80" fill="#f04fbf"/><rect x="5.55" y="13.80" width="2.80" height="2.80" fill="#f04fbf"/><rect x="8.30" y="13.80" width="2.80" height="2.80" fill="#f04fbf"/><rect x="11.05" y="13.80" width="2.80" height="2.80" fill="#f04fbf"/><rect x="13.80" y="13.80" width="2.80" height="2.80" fill="#f04fbf"/><rect x="16.55" y="13.80" width="2.80" height="2.80" fill="#f04fbf"/><rect x="19.30" y="13.80" width="2.80" height="2.80" fill="#f04fbf"/><rect x="22.05" y="13.80" width="2.80" height="2.80" fill="#f04fbf"/><rect x="2.80" y="16.55" width="2.80" height="2.80" fill="#f04fbf"/><rect x="5.55" y="16.55" width="2.80" height="2.80" fill="#f04fbf"/><rect x="8.30" y="16.55" width="2.80" height="2.80" fill="#f04fbf"/><rect x="11.05" y="16.55" width="2.80" height="2.80" fill="#f04fbf"/><rect x="13.80" y="16.55" width="2.80" height="2.80" fill="#f04fbf"/><rect x="16.55" y="16.55" width="2.80" height="2.80" fill="#f04fbf"/><rect x="19.30" y="16.55" width="2.80" height="2.80" fill="#f04fbf"/><rect x="22.05" y="16.55" width="2.80" height="2.80" fill="#f04fbf"/><rect x="2.80" y="19.30" width="2.80" height="2.80" fill="#f04fbf"/><rect x="5.55" y="19.30" width="2.80" height="2.80" fill="#f04fbf"/><rect x="11.05" y="19.30" width="2.80" height="2.80" fill="#f04fbf"/><rect x="13.80" y="19.30" width="2.80" height="2.80" fill="#f04fbf"/><rect x="19.30" y="19.30" width="2.80" height="2.80" fill="#f04fbf"/><rect x="22.05" y="19.30" width="2.80" height="2.80" fill="#f04fbf"/></g></svg>
<svg class="abs" style="left:49px;top:1033px;" width="24" height="24" viewBox="0 0 24 24"><circle cx="12" cy="12" r="10.4" fill="none" stroke="#9f9f9f" stroke-width="1.6"/><path d="M8.6,9.4 C8.6,7.2 10.2,6.2 12,6.2 C13.9,6.2 15.3,7.4 15.3,9.2 C15.3,11.4 12.4,11.8 12.4,14.4" fill="none" stroke="#9f9f9f" stroke-width="1.6"/><circle cx="12.4" cy="17.4" r="1.1" fill="#9f9f9f"/></svg>
<svg class="abs" style="left:149px;top:69px;" width="21" height="21" viewBox="0 0 21 21"><rect x="0.0" y="0.0" width="9.9" height="9.9" rx="2.4" fill="#c2c2c2"/><rect x="0.0" y="11.1" width="9.9" height="9.9" rx="2.4" fill="#c2c2c2"/><rect x="11.1" y="0.0" width="9.9" height="9.9" rx="2.4" fill="#c2c2c2"/><rect x="11.1" y="11.1" width="9.9" height="9.9" rx="2.4" fill="#c2c2c2"/></svg>
<svg class="abs" style="left:271px;top:78px;" width="9" height="6" viewBox="0 0 9 6"><path d="M0.8,1.2 H8.2 L4.5,5.2 Z" fill="#c8c8c8"/></svg>
<svg class="abs" style="left:1216px;top:71px;" width="27" height="16" viewBox="0 0 27 16"><defs><linearGradient id="og" x1="0" y1="0" x2="0" y2="1"><stop offset="0" stop-color="#f26b2a"/><stop offset="1" stop-color="#fcc43a"/></linearGradient></defs><rect x="1" y="6" width="3.1" height="9" fill="#e6e6e6"/><rect x="5.2" y="3" width="3.8" height="12" fill="#dcdcdc"/><rect x="9.9" y="8.2" width="3.1" height="6.8" fill="#e6e6e6"/><rect x="13.9" y="1" width="3.3" height="14" fill="#e6e6e6"/><path d="M20.5,3 V13 M16,8 H25.2" stroke="url(#og)" stroke-width="4.2"/></svg>
<svg class="abs" style="left:1264px;top:68px;" width="22" height="20" viewBox="0 0 22 20"><path d="M10.70,2.80L12.82,7.49L17.93,8.05L14.12,11.51L15.17,16.55L10.70,14.00L6.23,16.55L7.28,11.51L3.47,8.05L8.58,7.49Z" fill="none" stroke="#9f9f9f" stroke-width="1.3" stroke-linejoin="miter"/></svg>
<svg class="abs" style="left:1307px;top:69px;" width="20" height="18" viewBox="0 0 20 18"><path d="M9.5,3.5 H5 Q3,3.5 3,5.5 V13.6 Q3,15.6 5,15.6 H12.2 Q14.2,15.6 14.2,13.6 V11.4" fill="none" stroke="#9f9f9f" stroke-width="1.6"/><path d="M5.6,13.2 C6,8.2 9.2,6.4 12.8,6.4 V9.6 L17.6,5 L12.8,0.8 V3.6 C8.2,3.8 5.8,7.6 5.6,13.2 Z" fill="#9f9f9f"/></svg>
<svg class="abs" style="left:1350px;top:70px;" width="16" height="16" viewBox="0 0 16 16"><path d="M1.6,1.6 H11.2 L14.6,5 V14.6 H1.6 Z" fill="none" stroke="#9f9f9f" stroke-width="1.5"/><rect x="4" y="1.6" width="6.4" height="4.6" fill="#9f9f9f"/><rect x="7.6" y="2.4" width="1.6" height="2.8" fill="#2b2b2e"/><rect x="3.6" y="8.6" width="9" height="6" fill="#9f9f9f"/><rect x="4.8" y="10.6" width="6.6" height="3" fill="#2b2b2e"/></svg>
<svg class="abs" style="left:1390px;top:70px;" width="17" height="17" viewBox="0 0 17 17"><g transform="translate(8.4,8.2)"><rect x="-1.9" y="-7.2" width="3.8" height="4" rx="0.6" fill="#9f9f9f" transform="rotate(0)"/><rect x="-1.9" y="-7.2" width="3.8" height="4" rx="0.6" fill="#9f9f9f" transform="rotate(45)"/><rect x="-1.9" y="-7.2" width="3.8" height="4" rx="0.6" fill="#9f9f9f" transform="rotate(90)"/><rect x="-1.9" y="-7.2" width="3.8" height="4" rx="0.6" fill="#9f9f9f" transform="rotate(135)"/><rect x="-1.9" y="-7.2" width="3.8" height="4" rx="0.6" fill="#9f9f9f" transform="rotate(180)"/><rect x="-1.9" y="-7.2" width="3.8" height="4" rx="0.6" fill="#9f9f9f" transform="rotate(225)"/><rect x="-1.9" y="-7.2" width="3.8" height="4" rx="0.6" fill="#9f9f9f" transform="rotate(270)"/><rect x="-1.9" y="-7.2" width="3.8" height="4" rx="0.6" fill="#9f9f9f" transform="rotate(315)"/><circle r="4.9" fill="#9f9f9f"/><circle r="1.9" fill="#2b2b2e"/></g></svg>
<svg class="abs" style="left:1439px;top:72px;" width="12" height="16" viewBox="0 0 12 16"><path d="M8.6,2.2 L3.4,7.6 L8.6,13" fill="none" stroke="#9f9f9f" stroke-width="3.3"/></svg>
<svg class="abs" style="left:1467px;top:70px;" width="19" height="18" viewBox="0 0 19 18"><circle cx="8.2" cy="7.8" r="5.2" fill="none" stroke="#9f9f9f" stroke-width="2"/><path d="M5.6,7.8 H10.8" stroke="#9f9f9f" stroke-width="1.8"/><path d="M12,11.6 L16.2,15.6" stroke="#9f9f9f" stroke-width="2.4" stroke-linecap="round"/></svg>
<svg class="abs" style="left:1503px;top:72px;" width="12" height="16" viewBox="0 0 12 16"><path d="M2.8,2.2 L8,7.6 L2.8,13" fill="none" stroke="#9f9f9f" stroke-width="3.3"/></svg>
<svg class="abs" style="left:1546px;top:69px;" width="18" height="18" viewBox="0 0 18 18"><circle cx="9" cy="9.2" r="6.4" fill="none" stroke="#9f9f9f" stroke-width="1.5"/><path d="M9.4,5.2 V9.6 H6.6" fill="none" stroke="#9f9f9f" stroke-width="1.3"/></svg>
<svg class="abs" style="left:1852px;top:69px;" width="20" height="19" viewBox="0 0 20 19"><path d="M16,7.2 A6.6,6.6 0 0 0 4,6.4" fill="none" stroke="#9f9f9f" stroke-width="2.2"/><path d="M16.8,2.4 V8.4 H10.8 Z" fill="#9f9f9f"/><path d="M4,11.4 A6.6,6.6 0 0 0 16,12.2" fill="none" stroke="#9f9f9f" stroke-width="2.2"/><path d="M3.2,16.2 V10.2 H9.2 Z" fill="#9f9f9f"/></svg>
<svg class="abs" style="left:8px;top:8px;" width="52" height="23" viewBox="0 0 52 23"><path d="M15.6,6 L9.6,11.6 L15.6,17.4" fill="none" stroke="#6f6f6f" stroke-width="1.5"/><path d="M35.6,6 L41.6,11.6 L35.6,17.4" fill="none" stroke="#b8b8b8" stroke-width="1.5"/></svg>
<svg class="abs" style="left:331px;top:8px;" width="37" height="23" viewBox="0 0 37 23"><rect x="13.5" y="8.8" width="8.2" height="8.2" rx="1" fill="none" stroke="#6f6f6f" stroke-width="1"/><path d="M16.8,6.2 V5.8 Q16.8,5.2 17.6,5.2 H23.6 Q24.4,5.2 24.4,6 V12.4 Q24.4,13.4 23.4,13.4 H23" fill="none" stroke="#6f6f6f" stroke-width="1"/></svg>
<svg class="abs" style="left:700px;top:10px;" width="18" height="18" viewBox="0 0 18 18"><path d="M6.2,7.6 V5.6 Q6.2,3.4 9,3.4 Q11.8,3.4 11.8,5.6 V7.6" fill="none" stroke="#a8a8a8" stroke-width="1.4"/><rect x="4.8" y="7.4" width="8.4" height="6.8" rx="0.8" fill="#a8a8a8"/></svg>
<svg class="abs" style="left:1140px;top:10px;" width="20" height="20" viewBox="0 0 20 20"><path d="M13.9,6.6 A5.6,5.6 0 1 0 15.2,10" fill="none" stroke="#6f6f6f" stroke-width="1.2"/><path d="M11.2,2.4 L15.6,5.6 L11.4,7.8 Z" fill="#6f6f6f"/></svg>
<svg class="abs" style="left:1169px;top:8px;" width="37" height="23" viewBox="0 0 37 23"><rect x="11.6" y="5.6" width="2" height="2" fill="#6f6f6f"/><rect x="11.6" y="9.2" width="2" height="2" fill="#6f6f6f"/><rect x="11.6" y="12.8" width="2" height="2" fill="#6f6f6f"/><rect x="15.5" y="5.6" width="2" height="2" fill="#6f6f6f"/><rect x="15.5" y="9.2" width="2" height="2" fill="#6f6f6f"/><rect x="15.5" y="12.8" width="2" height="2" fill="#6f6f6f"/><rect x="19.4" y="5.6" width="2" height="2" fill="#6f6f6f"/><rect x="19.4" y="9.2" width="2" height="2" fill="#6f6f6f"/><rect x="19.4" y="12.8" width="2" height="2" fill="#6f6f6f"/><rect x="23.3" y="5.6" width="2" height="2" fill="#6f6f6f"/><rect x="23.3" y="9.2" width="2" height="2" fill="#6f6f6f"/><rect x="23.3" y="12.8" width="2" height="2" fill="#6f6f6f"/></svg>
<svg class="abs" style="left:1476px;top:8px;" width="38" height="23" viewBox="0 0 38 23"><rect x="11.4" y="5.6" width="16.6" height="11.4" rx="1.4" fill="none" stroke="#6f6f6f" stroke-width="1"/><path d="M12.4,6.6 L19.6,12.6 L26.8,6.6 M12.2,16.2 L17,11.4 M27.2,16.2 L22.4,11.4" fill="none" stroke="#6f6f6f" stroke-width="0.8"/></svg>
<svg class="abs" style="left:1521px;top:8px;" width="38" height="23" viewBox="0 0 38 23"><path d="M14,5.8 V4.6 H26 V5.8" fill="none" stroke="#6f6f6f" stroke-width="0.9"/><rect x="11" y="7" width="18" height="7.6" rx="1.4" fill="#6f6f6f"/><rect x="14" y="11" width="12" height="6.8" fill="#f6f6f6" stroke="#6f6f6f" stroke-width="0.9"/></svg>
<svg class="abs" style="left:1830px;top:8px;" width="38" height="23" viewBox="0 0 38 23"><circle cx="19" cy="10.8" r="6.9" fill="#6f6f6f"/><path d="M19,6.4 V13 M15.6,10.6 L19,14.4 L22.4,10.6" fill="none" stroke="#fafafa" stroke-width="2"/></svg>
<svg class="abs" style="left:1874px;top:8px;" width="38" height="23" viewBox="0 0 38 23"><path d="M16.6,9.4 H14.6 V17.8 H25 V9.4 H23" fill="none" stroke="#6f6f6f" stroke-width="1"/><path d="M19.6,12.8 V3.4 M16.6,6.2 L19.6,3 L22.6,6.2" fill="none" stroke="#6f6f6f" stroke-width="1"/></svg>
<div class="abs" style="left:1895px;top:38px;width:1px;height:25px;background:#a5a5a5"></div>
<svg class="abs" style="left:1900px;top:43px;" width="15" height="15" viewBox="0 0 15 15"><path d="M7.4,1.8 V12.8 M1.9,7.4 H12.9" stroke="#6f6f6f" stroke-width="1"/></svg>
<div class="panel" style="left:141px;top:700px;width:573px;height:268px"><div class="ptitle">Panel Title</div><svg class="plot" width="573" height="268" style="position:absolute;left:0;top:0"><line x1="35" x2="548" y1="35.8" y2="35.8" stroke="#4f4f51" stroke-width="1"/><line x1="35" x2="548" y1="85.5" y2="85.5" stroke="#4f4f51" stroke-width="1"/><line x1="35" x2="548" y1="135.1" y2="135.1" stroke="#4f4f51" stroke-width="1"/><line x1="35" x2="548" y1="184.8" y2="184.8" stroke="#4f4f51" stroke-width="1"/><line x1="35" x2="548" y1="234.4" y2="234.4" stroke="#4f4f51" stroke-width="1"/><line x1="109.7" x2="109.7" y1="35.3" y2="233.9" stroke="#4f4f51" stroke-width="1"/><line x1="190.7" x2="190.7" y1="35.3" y2="233.9" stroke="#4f4f51" stroke-width="1"/><line x1="271.6" x2="271.6" y1="35.3" y2="233.9" stroke="#4f4f51" stroke-width="1"/><line x1="352.6" x2="352.6" y1="35.3" y2="233.9" stroke="#4f4f51" stroke-width="1"/><line x1="433.5" x2="433.5" y1="35.3" y2="233.9" stroke="#4f4f51" stroke-width="1"/><line x1="514.5" x2="514.5" y1="35.3" y2="233.9" stroke="#4f4f51" stroke-width="1"/></svg><div class="ylab" style="top:28.3px;right:544px">1.0</div><div class="ylab" style="top:78.0px;right:544px">0.5</div><div class="ylab" style="top:127.6px;right:544px">0</div><div class="ylab" style="top:177.2px;right:544px">-0.5</div><div class="ylab" style="top:226.9px;right:544px">-1.0</div><div class="xlab" style="left:89.7px;top:238.9px">15:48</div><div class="xlab" style="left:170.7px;top:238.9px">15:50</div><div class="xlab" style="left:251.6px;top:238.9px">15:52</div><div class="xlab" style="left:332.6px;top:238.9px">15:54</div><div class="xlab" style="left:413.5px;top:238.9px">15:56</div><div class="xlab" style="left:494.5px;top:238.9px">15:58</div><div class="nodata" style="top:103px">No data points</div><div class="rh"></div></div>
<div class="panel" style="left:726px;top:700px;width:572px;height:268px"><div class="ptitle"><svg width="14" height="13" viewBox="0 0 14 13" style="vertical-align:-2px;margin-right:5px"><path d="M7,12.2 L1.6,6.8 C0,5.2 0.2,2.4 2.2,1.4 C3.8,0.6 5.6,1 7,2.6 C8.4,1 10.2,0.6 11.8,1.4 C13.8,2.4 14,5.2 12.4,6.8 Z" fill="none" stroke="#8a8a8a" stroke-width="0.9"/><path d="M7,10.4 L2.8,6.2 C1.8,5.2 1.9,3.4 3.1,2.7 C4.3,2.1 5.8,2.5 7,4 C8.2,2.5 9.7,2.1 10.9,2.7 C12.1,3.4 12.2,5.2 11.2,6.2 Z" fill="#dcdcdc"/></svg>Panel Title</div><svg class="plot" width="572" height="268" style="position:absolute;left:0;top:0"><rect x="35" y="35.3" width="512" height="198.60000000000002" fill="#3a2a2e"/><line x1="35" x2="547" y1="35.8" y2="35.8" stroke="#5a5254" stroke-width="1"/><line x1="35" x2="547" y1="85.5" y2="85.5" stroke="#5a5254" stroke-width="1"/><line x1="35" x2="547" y1="135.1" y2="135.1" stroke="#5a5254" stroke-width="1"/><line x1="35" x2="547" y1="184.8" y2="184.8" stroke="#5a5254" stroke-width="1"/><line x1="35" x2="547" y1="234.4" y2="234.4" stroke="#5a5254" stroke-width="1"/><line x1="109.7" x2="109.7" y1="35.3" y2="233.9" stroke="#5a5254" stroke-width="1"/><line x1="190.7" x2="190.7" y1="35.3" y2="233.9" stroke="#5a5254" stroke-width="1"/><line x1="271.6" x2="271.6" y1="35.3" y2="233.9" stroke="#5a5254" stroke-width="1"/><line x1="352.6" x2="352.6" y1="35.3" y2="233.9" stroke="#5a5254" stroke-width="1"/><line x1="433.5" x2="433.5" y1="35.3" y2="233.9" stroke="#5a5254" stroke-width="1"/><line x1="514.5" x2="514.5" y1="35.3" y2="233.9" stroke="#5a5254" stroke-width="1"/></svg><div class="ylab" style="top:28.3px;right:543px">1.0</div><div class="ylab" style="top:78.0px;right:543px">0.5</div><div class="ylab" style="top:127.6px;right:543px">0</div><div class="ylab" style="top:177.2px;right:543px">-0.5</div><div class="ylab" style="top:226.9px;right:543px">-1.0</div><div class="xlab" style="left:89.7px;top:238.9px">15:48</div><div class="xlab" style="left:170.7px;top:238.9px">15:50</div><div class="xlab" style="left:251.6px;top:238.9px">15:52</div><div class="xlab" style="left:332.6px;top:238.9px">15:54</div><div class="xlab" style="left:413.5px;top:238.9px">15:56</div><div class="xlab" style="left:494.5px;top:238.9px">15:58</div><div class="nodata" style="top:103px">No data points</div><div class="rh"></div></div>
<div class="panel" style="left:1310px;top:700px;width:572px;height:268px"><div class="ptitle" style="padding-left:12px"><svg width="14" height="13" viewBox="0 0 14 13" style="vertical-align:-2px;margin-right:5px"><path d="M7,12.2 L1.6,6.8 C0,5.2 0.2,2.4 2.2,1.4 C3.8,0.6 5.6,1 7,2.6 C8.4,1 10.2,0.6 11.8,1.4 C13.8,2.4 14,5.2 12.4,6.8 Z" fill="none" stroke="#8a8a8a" stroke-width="0.9"/><path d="M7,10.4 L2.8,6.2 C1.8,5.2 1.9,3.4 3.1,2.7 C4.3,2.1 5.8,2.5 7,4 C8.2,2.5 9.7,2.1 10.9,2.7 C12.1,3.4 12.2,5.2 11.2,6.2 Z" fill="#dcdcdc"/></svg>Panel Title<span class="pcaret"></span></div><svg class="plot" width="572" height="268" style="position:absolute;left:0;top:0"><rect x="35" y="35.3" width="512" height="198.60000000000002" fill="#3a2a2e"/><line x1="35" x2="547" y1="35.8" y2="35.8" stroke="#5a5254" stroke-width="1"/><line x1="35" x2="547" y1="85.5" y2="85.5" stroke="#5a5254" stroke-width="1"/><line x1="35" x2="547" y1="135.1" y2="135.1" stroke="#5a5254" stroke-width="1"/><line x1="35" x2="547" y1="184.8" y2="184.8" stroke="#5a5254" stroke-width="1"/><line x1="35" x2="547" y1="234.4" y2="234.4" stroke="#5a5254" stroke-width="1"/><line x1="109.7" x2="109.7" y1="35.3" y2="233.9" stroke="#5a5254" stroke-width="1"/><line x1="190.7" x2="190.7" y1="35.3" y2="233.9" stroke="#5a5254" stroke-width="1"/><line x1="271.6" x2="271.6" y1="35.3" y2="233.9" stroke="#5a5254" stroke-width="1"/><line x1="352.6" x2="352.6" y1="35.3" y2="233.9" stroke="#5a5254" stroke-width="1"/><line x1="433.5" x2="433.5" y1="35.3" y2="233.9" stroke="#5a5254" stroke-width="1"/><line x1="514.5" x2="514.5" y1="35.3" y2="233.9" stroke="#5a5254" stroke-width="1"/><line x1="339.5" x2="339.5" y1="35.3" y2="233.9" stroke="#8c0e16" stroke-width="1.5"/></svg><div class="ylab" style="top:28.3px;right:543px">1.0</div><div class="ylab" style="top:78.0px;right:543px">0.5</div><div class="ylab" style="top:127.6px;right:543px">0</div><div class="ylab" style="top:177.2px;right:543px">-0.5</div><div class="ylab" style="top:226.9px;right:543px">-1.0</div><div class="xlab" style="left:89.7px;top:238.9px">15:48</div><div class="xlab" style="left:170.7px;top:238.9px">15:50</div><div class="xlab" style="left:251.6px;top:238.9px">15:52</div><div class="xlab" style="left:332.6px;top:238.9px">15:54</div><div class="xlab" style="left:413.5px;top:238.9px">15:56</div><div class="xlab" style="left:494.5px;top:238.9px">15:58</div><div class="nodata" style="top:103px">No data points</div><div class="rh"></div></div>
<div class="panel" style="left:141px;top:980px;width:865px;height:120px"><div class="ptitle">Panel Title</div></div>
<div class="panel" style="left:1018px;top:980px;width:864px;height:120px"><div class="ptitle">Panel Title</div></div>
<svg class="abs" style="left:1018px;top:980px" width="864" height="100"><line x1="35" x2="840" y1="35.5" y2="35.5" stroke="#4f4f51" stroke-width="1"/><line x1="87.5" x2="87.5" y1="35" y2="100" stroke="#4f4f51" stroke-width="1"/><line x1="151.2" x2="151.2" y1="35" y2="100" stroke="#4f4f51" stroke-width="1"/><line x1="214.9" x2="214.9" y1="35" y2="100" stroke="#4f4f51" stroke-width="1"/><line x1="278.7" x2="278.7" y1="35" y2="100" stroke="#4f4f51" stroke-width="1"/><line x1="342.4" x2="342.4" y1="35" y2="100" stroke="#4f4f51" stroke-width="1"/><line x1="406.1" x2="406.1" y1="35" y2="100" stroke="#4f4f51" stroke-width="1"/><line x1="469.8" x2="469.8" y1="35" y2="100" stroke="#4f4f51" stroke-width="1"/><line x1="533.5" x2="533.5" y1="35" y2="100" stroke="#4f4f51" stroke-width="1"/><line x1="597.3" x2="597.3" y1="35" y2="100" stroke="#4f4f51" stroke-width="1"/><line x1="661.0" x2="661.0" y1="35" y2="100" stroke="#4f4f51" stroke-width="1"/><line x1="724.7" x2="724.7" y1="35" y2="100" stroke="#4f4f51" stroke-width="1"/><line x1="788.4" x2="788.4" y1="35" y2="100" stroke="#4f4f51" stroke-width="1"/></svg>
<div class="ylab" style="left:1014px;top:1008px;width:34px">1.0</div>
<div class="abs" style="left:1904px;top:119px;width:8px;height:581px;background:#000"></div>
<div class="abs" style="left:1905px;top:120px;width:6px;height:579px;background:linear-gradient(90deg,#4a4b5a,#3b3c48)"></div>
<div class="abs" style="left:1912px;top:86px;width:8px;height:994px;background:#000"></div>
<div class="abs" style="left:1913px;top:87px;width:6px;height:992px;background:linear-gradient(90deg,#4a4b5a,#3b3c48)"></div></body></html>
